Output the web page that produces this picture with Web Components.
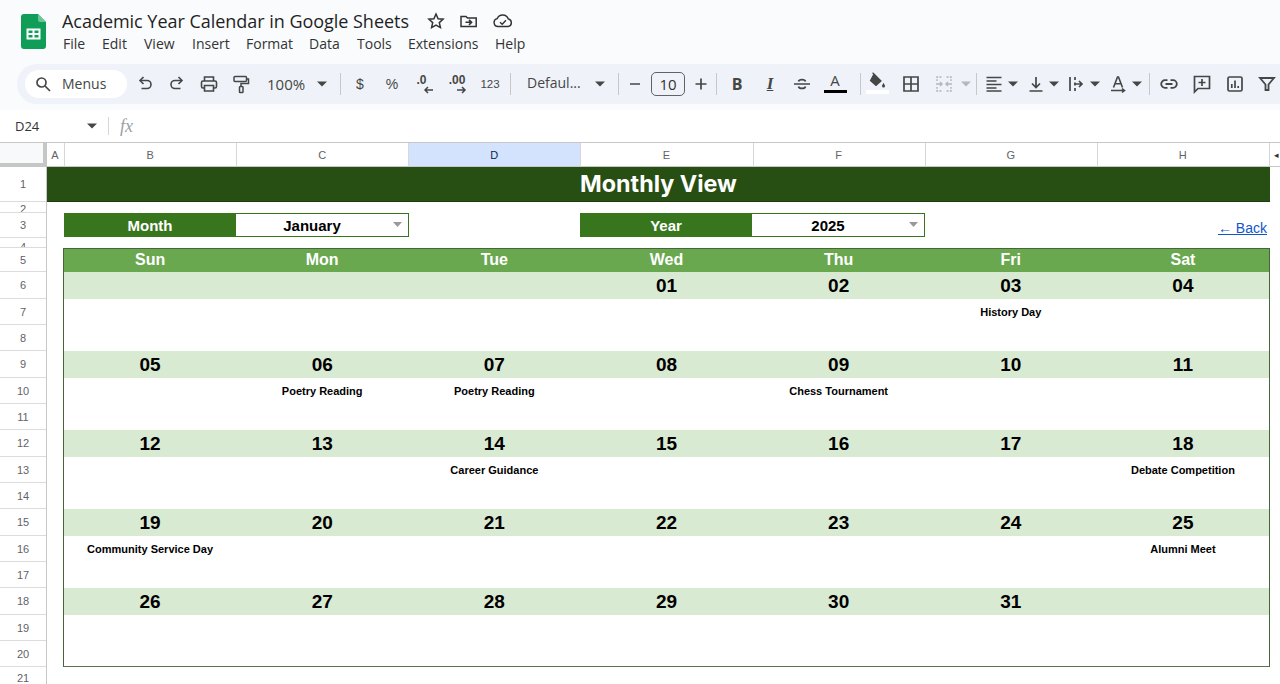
<!DOCTYPE html>
<html lang="en"><head><meta charset="utf-8"><title>Academic Year Calendar in Google Sheets</title>
<style>
html,body{margin:0;height:684px;overflow:hidden;background:#fff}
body{font-family:"Liberation Sans",Arial,sans-serif}
sheets-app{display:block}
</style></head><body>
<sheets-app></sheets-app>
<script>
function def(name,css,html){
  customElements.define(name,class extends HTMLElement{
    constructor(){super();const s=this.attachShadow({mode:'open'});s.innerHTML=`<style>${css}</style>${typeof html==='function'?html(this):html}`}
  });
}
const car=(c='#444746')=>`<svg width="10" height="6" viewBox="0 0 10 6"><path d="M0 .5h10L5 5.500z" fill="${c}"/></svg>`;

def('doc-header',`
:host{display:flex;height:64px;background:#f9fbfd;box-sizing:border-box;padding:14px 0 0 21px;color:#1f1f1f}
.logo{width:25px;height:35px;margin-right:16px;flex:none}
.right{display:flex;flex-direction:column}
.top{display:flex;align-items:center;height:16px;margin-top:-1px}
h1{margin:0;font:400 18px/16px "Open Sans",sans-serif;width:347px;white-space:nowrap;letter-spacing:-.03px}
.ic{display:flex;margin-left:18px}
.ic svg{display:block}
.ic svg+svg{margin-left:14px}
nav{display:flex;margin-top:7px;font:400 14px/16px "Open Sans",sans-serif;color:#333;margin-left:1px}
nav span{display:block}
`,`
<svg class="logo" viewBox="0 0 25 35"><path d="M3 0h14l8 8v24a3 3 0 0 1-3 3H3a3 3 0 0 1-3-3V3a3 3 0 0 1 3-3z" fill="#0f9d58"/><path d="M17 0l8 8h-6a2 2 0 0 1-2-2z" fill="#6cc597"/><path d="M6.500 15.500h12v9h-12zM6.500 20h12M12.500 15.500v9" fill="none" stroke="#fff" stroke-width="2"/></svg>
<div class="right">
 <div class="top"><h1>Academic Year Calendar in Google Sheets</h1>
  <div class="ic">
   <svg width="18" height="18" viewBox="0 0 18 18" fill="none" stroke="#333" stroke-width="1.500"><path d="M9 2l2.100 4.700 5 .5-3.800 3.400 1.100 5L9 13l-4.400 2.600 1.100-5L1.900 7.200l5-.5z"/></svg>
   <svg width="19" height="18" viewBox="0 0 19 18" fill="none" stroke="#333" stroke-width="1.500"><path d="M2 4.500h5l1.500 1.500H17.200v8.500H2z"/><path d="M6.500 10.300h6M10 7.800l2.600 2.500-2.600 2.500" stroke-width="1.600"/></svg>
   <svg width="22" height="18" viewBox="0 0 22 18" fill="none" stroke="#333" stroke-width="1.400"><path d="M6 14.500a4 4 0 0 1-.8-7.900A6 6 0 0 1 16.300 7a3.800 3.800 0 0 1-.3 7.500z"/><path d="M8 10.300l2.200 2 3.800-4"/></svg>
  </div>
 </div>
 <nav><span style="width:39px">File</span><span style="width:42px">Edit</span><span style="width:48px">View</span><span style="width:54px">Insert</span><span style="width:63px">Format</span><span style="width:48px">Data</span><span style="width:51px">Tools</span><span style="width:87px">Extensions</span><span>Help</span></nav>
</div>`);

def('tb-btn',`
:host{display:flex;align-items:center;justify-content:center;flex:none;width:var(--w,32px);height:28px;font:400 14px "Open Sans",sans-serif;color:#444746;position:relative}
::slotted(svg){display:block;flex:none}
`,`<slot></slot>`);

def('tb-sep',`:host{display:block;flex:none;width:1px;height:22px;background:#c7c7c7;margin:0 var(--r,3px) 0 var(--l,8px)}`,``);

def('search-pill',`
:host{display:flex;align-items:center;flex:none;box-sizing:border-box;width:102px;height:28px;background:#fff;border-radius:14px;padding:0 0 1px 9px;color:#444746;font:400 14px "Open Sans",sans-serif}
svg{display:block;margin-right:10px}
`,`<svg width="18" height="18" viewBox="0 0 18 18" fill="none" stroke="#444746" stroke-width="1.700"><circle cx="7.500" cy="7.500" r="4.500"/><path d="M11 11l5 5"/></svg><slot></slot>`);

def('tool-bar',`
:host{display:flex;align-items:center;box-sizing:border-box;height:40px;margin-left:17px;padding-left:8px;background:#eff2f8;border-radius:20px 0 0 20px;overflow:hidden}
.z{font-size:15px;justify-content:flex-start;padding-left:10px;box-sizing:border-box}
.z svg{margin-left:12px}
.t{font:400 14px "Liberation Sans",sans-serif}
.dec{flex-direction:column;font:700 12px/12px "Liberation Sans",sans-serif;letter-spacing:0}
.dec svg{margin-top:0}
.sz{flex:none;width:34px;height:24px;box-sizing:border-box;border:1px solid #5f6368;border-radius:5px;display:flex;align-items:center;justify-content:center;font:400 15px "Open Sans",sans-serif;color:#333}
.c{--w:10px}
`,`
<search-pill>Menus</search-pill>
<tb-btn style="--w:32px;margin-left:2px"><svg width="20" height="20" viewBox="0 0 20 20" fill="none" stroke="#444746" stroke-width="1.600"><path d="M8.500 3L5 6.500 8.500 10"/><path d="M5.500 6.500H12a3.800 3.800 0 0 1 0 8H6.500"/></svg></tb-btn>
<tb-btn><svg width="20" height="20" viewBox="0 0 20 20" fill="none" stroke="#444746" stroke-width="1.600"><path d="M11.500 3L15 6.500 11.500 10"/><path d="M14.500 6.500H8a3.800 3.800 0 0 0 0 8h5.500"/></svg></tb-btn>
<tb-btn><svg width="20" height="20" viewBox="0 0 20 20" fill="none" stroke="#444746" stroke-width="1.600"><path d="M5.500 7V3h9v4"/><rect x="2.500" y="7" width="15" height="7" rx="1.500"/><path d="M5.500 11.500h9V17h-9z" fill="#eff2f8"/></svg></tb-btn>
<tb-btn><svg width="20" height="20" viewBox="0 0 20 20" fill="none" stroke="#444746" stroke-width="1.500"><rect x="3" y="2.500" width="12.500" height="5" rx="1"/><path d="M15.500 5h2v4.500H10v3"/><rect x="8.500" y="12.500" width="3.500" height="6" rx=".8"/></svg></tb-btn>
<tb-btn class="z" style="--w:75px"><span>100%</span>${car()}</tb-btn>
<tb-sep></tb-sep>
<tb-btn class="t">$</tb-btn>
<tb-btn class="t">%</tb-btn>
<tb-btn class="dec"><span style="margin-left:-5px">.0</span><svg width="11" height="8" viewBox="0 0 11 8" fill="none" stroke="#444746" stroke-width="1.500" style="margin-left:9px"><path d="M10 4H2M5 1L2 4l3 3"/></svg></tb-btn>
<tb-btn class="dec" style="margin-left:1px"><span>.00</span><svg width="11" height="8" viewBox="0 0 11 8" fill="none" stroke="#444746" stroke-width="1.500" style="margin-left:8px"><path d="M1 4h8M6 1l3 3-3 3"/></svg></tb-btn>
<tb-btn class="t" style="margin-left:1px;font-size:11.500px">123</tb-btn>
<tb-sep style="--l:4px;--r:0px"></tb-sep>
<tb-btn style="--w:107px;justify-content:flex-start;padding:0 0 3px 16px;box-sizing:border-box"><span>Defaul...</span><svg width="10" height="6" viewBox="0 0 10 6" style="margin:3px 0 0 14px"><path d="M0 .5h10L5 5.500z" fill="#444746"/></svg></tb-btn>
<tb-sep style="--l:0px;--r:0px"></tb-sep>
<tb-btn style="--w:32px"><svg width="14" height="14" viewBox="0 0 14 14"><path d="M2 7h10" stroke="#444746" stroke-width="1.700"/></svg></tb-btn>
<span class="sz">10</span>
<tb-btn style="--w:31px"><svg width="14" height="14" viewBox="0 0 14 14"><path d="M1.500 7h11M7 1.500v11" stroke="#444746" stroke-width="1.700"/></svg></tb-btn>
<tb-sep style="--l:0px;--r:4px"></tb-sep>
<tb-btn style="font:700 16px 'Open Sans',sans-serif">B</tb-btn>
<tb-btn style="font:italic 700 17px 'Liberation Serif',serif;text-decoration:underline;margin-left:1px">I</tb-btn>
<tb-btn><svg width="20" height="20" viewBox="0 0 20 20" fill="none" stroke="#444746" stroke-width="1.700"><path d="M2 10h16M6.500 7.500C7 5 13 5 13.500 7.500M6.500 12.500c.5 2.500 6.500 2.500 7 0"/></svg></tb-btn>
<tb-btn style="flex-direction:column;justify-content:flex-start;font:400 15px/19px 'Open Sans',sans-serif;padding-top:1px;height:27px;margin-left:1px"><span>A</span><i style="display:block;width:23px;height:3px;background:#000"></i></tb-btn>
<tb-sep style="--l:9px;--r:0px"></tb-sep>
<tb-btn style="flex-direction:column;justify-content:flex-start;--w:32px;margin-top:0"><svg width="20" height="18" viewBox="0 0 20 18" style="margin-top:2px"><path d="M7 2l7 7-5 4.500L3.500 8.500zM7 2L5.500.8" fill="#444746" stroke="#444746" stroke-width="1.200"/><path d="M16.500 11s-1.500 2-1.500 3a1.500 1.500 0 0 0 3 0c0-1-1.500-3-1.500-3z" fill="#444746"/></svg><i style="display:block;width:23px;height:4px;background:#fff"></i></tb-btn>
<tb-btn style="margin-left:2px"><svg width="20" height="20" viewBox="0 0 20 20" fill="none" stroke="#444746" stroke-width="1.700"><path d="M3 3h14v14H3zM10 3v14M3 10h14"/></svg></tb-btn>
<tb-btn style="--w:27px;margin-left:3px"><svg width="20" height="20" viewBox="0 0 20 20" fill="none" stroke="#b4b8bd" stroke-width="1.500"><path d="M7.500 3H3v4M7.500 17H3v-4M12.500 3H17v4M12.500 17H17v-4" stroke-dasharray="2.200 1.200"/><path d="M2 10h6M6 8l2 2-2 2M18 10h-6M14 8l-2 2 2 2"/></svg></tb-btn>
<tb-btn style="--w:14px;margin-left:2px">${car('#b4b8bd')}</tb-btn>
<tb-sep style="--l:3px;--r:3px"></tb-sep>
<tb-btn style="--w:28px"><svg width="20" height="20" viewBox="0 0 20 20" fill="none" stroke="#444746" stroke-width="1.500"><path d="M2.500 3.500h15M2.500 7h10M2.500 10.500h15M2.500 14h10M2.500 17h15"/></svg></tb-btn>
<tb-btn class="c">${car()}</tb-btn>
<tb-btn style="--w:28px;margin-left:4px"><svg width="20" height="20" viewBox="0 0 20 20" fill="none" stroke="#444746" stroke-width="1.700"><path d="M3.500 17h13M10 3v10M6 9.500l4 4 4-4"/></svg></tb-btn>
<tb-btn class="c" style="margin-left:-1px">${car()}</tb-btn>
<tb-btn style="--w:28px;margin-left:3px"><svg width="20" height="20" viewBox="0 0 20 20" fill="none" stroke="#444746" stroke-width="1.700"><path d="M4 3v14M9 3v3M9 8.500v3M9 14v3M8 10h8M13 7l3 3-3 3"/></svg></tb-btn>
<tb-btn class="c">${car()}</tb-btn>
<tb-btn style="--w:28px;margin-left:4px"><svg width="20" height="20" viewBox="0 0 20 20" fill="none" stroke="#444746" stroke-width="1.600"><path d="M5.500 13.500L9.500 3h1l4 10.500M7 9.800h6"/><path d="M3 16.500h13M14 14.500l2.500 2-2.500 2"/></svg></tb-btn>
<tb-btn class="c">${car()}</tb-btn>
<tb-sep style="--l:7px;--r:3px"></tb-sep>
<tb-btn><svg width="20" height="20" viewBox="0 0 20 20" fill="none" stroke="#444746" stroke-width="1.800"><path d="M8.500 6.200H6a3.800 3.800 0 0 0 0 7.600h2.500M11.500 6.200H14a3.800 3.800 0 0 1 0 7.600h-2.500M6.500 10h7"/></svg></tb-btn>
<tb-btn style="margin-left:1px"><svg width="20" height="20" viewBox="0 0 20 20" fill="none" stroke="#444746" stroke-width="1.700"><path d="M2.500 2.500h15v12H6l-3.500 3.500zM10 5v7M6.500 8.500h7"/></svg></tb-btn>
<tb-btn style="margin-left:1px"><svg width="20" height="20" viewBox="0 0 20 20" fill="none" stroke="#444746" stroke-width="1.700"><rect x="3" y="3" width="14" height="14" rx="1.500"/><path d="M6.800 14V10M10 14V6.500M13.200 14v-2"/></svg></tb-btn>
<tb-btn><svg width="20" height="20" viewBox="0 0 20 20" fill="none" stroke="#444746" stroke-width="1.800"><path d="M3 4h14l-5.500 6.500V16h-3v-5.500z"/></svg></tb-btn>
`);

def('formula-bar',`
:host{display:flex;align-items:center;box-sizing:border-box;height:32px;margin-top:6px;background:#fff;font:400 13px "Open Sans",sans-serif;color:#333;padding-left:15px}
.name{width:72px}
svg{display:block}
.sep{width:1px;height:18px;background:#d5d7da;margin:0 11px 0 11px}
.fx{font:italic 400 18px "Liberation Serif",serif;color:#9aa0a6}
`,`<span class="name">D24</span>${car()}<span class="sep"></span><span class="fx">fx</span>`);

const ROWS=[[1,35],[2,11],[3,25],[4,10],[5,24],[6,27],[7,26],[8,26],[9,27],[10,26],[11,26],[12,27],[13,26],[14,26],[15,27],[16,26],[17,26],[18,27],[19,26],[20,26],[21,22]];
def('row-heads',`
:host{display:block;width:47px;box-sizing:border-box;border-right:1px solid #c7c7c7;background:#fff;font:400 11px/12px "Liberation Sans",sans-serif;color:#5f6368}
div{box-sizing:border-box;border-bottom:1px solid #dadce0;display:flex;justify-content:center;align-items:center;overflow:hidden}
.r2{align-items:flex-start;padding-top:1px}
.r4{align-items:flex-start;padding-top:3px}
`,()=>ROWS.map(([n,h])=>`<div class="r${n}" style="height:${h}px">${n}</div>`).join(''));

def('col-heads',`
:host{display:grid;grid-template-columns:47px 18px repeat(7,172.14px) 1fr;height:25px;box-sizing:border-box;border-top:1px solid #c7c7c7;font:400 11px/24px "Liberation Sans",sans-serif;color:#5f6368;text-align:center;background:#fff}
div{border-right:1px solid #d5d7da;border-bottom:1px solid #c7c7c7;box-sizing:border-box;height:24px;padding-right:1px}
.corner{background:#f8f9fa;border-right:4px solid #c4c7c5;border-bottom:4px solid #c4c7c5;padding:0}
.sel{background:#d3e3fd;color:#0b1f4a}
.end{border-right:0;font-size:9px;color:#333;padding:0 0 0 3px}
`,`<div class="corner"></div><div>A</div><div>B</div><div>C</div><div class="sel">D</div><div>E</div><div>F</div><div>G</div><div>H</div><div class="end">◂</div>`);

def('title-banner',`
:host{display:block;height:35px;background:#274e13;color:#fff;text-align:center;font:700 23.300px/34px Inter,sans-serif;border-bottom:1px solid #1e3d0e;box-sizing:border-box}
`,`<slot></slot>`);

def('select-pair',`
:host{display:grid;grid-template-columns:172px 173px;grid-template-rows:24px;height:24px;box-sizing:border-box;font:700 15px/26px "Liberation Sans",sans-serif;text-align:center}
.l{background:#38761d;color:#fff;height:24px}
.v{border:1px solid #38761d;border-left:0;box-sizing:border-box;height:24px;color:#000;display:flex;align-items:flex-start;background:#fff}
.v span{flex:1;padding-right:5px;margin-top:-1px}
svg{display:block;margin:8px 6px 0 0}
`,`<div class="l"><slot name="label"></slot></div><div class="v"><span><slot></slot></span><svg width="9" height="5" viewBox="0 0 9 5"><path d="M0 0h9L4.500 5z" fill="#999"/></svg></div>`);

def('select-row',`
:host{display:flex;box-sizing:border-box;height:46px;padding:11px 0 10px 17px;align-items:flex-start}
.gap{width:171px;flex:none}
a{margin-left:auto;margin-right:13px;margin-top:7px;color:#1155cc;text-decoration:underline;font:400 14px/16px "Liberation Sans",sans-serif}
`,`<select-pair><span slot="label">Month</span>January</select-pair><span class="gap"></span><select-pair><span slot="label">Year</span>2025</select-pair><a href="#">← Back</a>`);

def('day-cell',`
:host{display:flex;flex-direction:column;min-width:0;text-align:center}
.d{height:27px;background:#d9ead3;font:700 19px/27px "Liberation Sans",sans-serif;color:#000}
.e{height:26px;font:700 11px/26px "Liberation Sans",sans-serif;color:#000;white-space:nowrap}
.b{height:26px}
`,el=>`<div class="d">${el.getAttribute('date')||''}</div><div class="e"><slot></slot></div><div class="b"></div>`);

def('cal-week',`:host{display:grid;grid-template-columns:repeat(7,1fr);height:79px}`,`<slot></slot>`);

def('cal-grid',`
:host{display:block;margin-left:16px;width:1207px;height:419px;box-sizing:border-box;border:1px solid #47643a;border-bottom-color:#5a7250;overflow:hidden}
.h{display:grid;grid-template-columns:repeat(7,1fr);height:23px;background:#6aa84f;color:#fff;font:700 16px/22px "Liberation Sans",sans-serif;text-align:center}
`,`<div class="h"><span>Sun</span><span>Mon</span><span>Tue</span><span>Wed</span><span>Thu</span><span>Fri</span><span>Sat</span></div><slot></slot>`);

const weeks=[
 [['',''],['',''],['',''],['01',''],['02',''],['03','History Day'],['04','']],
 [['05',''],['06','Poetry Reading'],['07','Poetry Reading'],['08',''],['09','Chess Tournament'],['10',''],['11','']],
 [['12',''],['13',''],['14','Career Guidance'],['15',''],['16',''],['17',''],['18','Debate Competition']],
 [['19','Community Service Day'],['20',''],['21',''],['22',''],['23',''],['24',''],['25','Alumni Meet']],
 [['26',''],['27',''],['28',''],['29',''],['30',''],['31',''],['','']]
];

def('sheet-view',`
:host{display:block;height:542px;overflow:hidden;background:#fff}
.b{display:flex}
.m{width:1233px;flex:none}
title-banner{margin-right:10px}
`,`<col-heads></col-heads><div class="b"><row-heads></row-heads><div class="m"><title-banner>Monthly View</title-banner><select-row></select-row><cal-grid>${
 weeks.map(w=>`<cal-week>${w.map(([d,e])=>`<day-cell date="${d}">${e}</day-cell>`).join('')}</cal-week>`).join('')
}</cal-grid></div></div>`);

def('sheets-app',`:host{display:block;background:#f9fbfd}`,`<doc-header></doc-header><tool-bar></tool-bar><formula-bar></formula-bar><sheet-view></sheet-view>`);
</script>
</body></html>
